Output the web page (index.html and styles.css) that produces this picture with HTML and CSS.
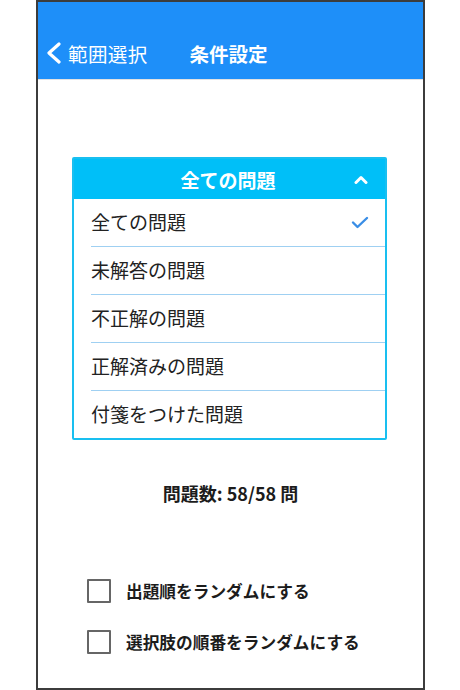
FILE: index.html
```html
<!DOCTYPE html>
<html lang="ja">
<head>
<meta charset="utf-8">
<link rel="stylesheet" href="styles.css">
</head>
<body>
<div class="phone">
  <header class="nav">
    <div class="nav-row">
      <a class="back">
        <svg class="back-icon" width="16" height="22" viewBox="0 0 16 22"><polyline points="13,2 3,11 13,20" fill="none" stroke="#fff" stroke-width="3.2" stroke-linecap="round" stroke-linejoin="round"/></svg>
        <span class="back-label">範囲選択</span>
      </a>
      <span class="nav-title">条件設定</span>
    </div>
  </header>
  <main class="content">
    <div class="dropdown">
      <div class="dd-head">
        <span class="dd-title">全ての問題</span>
        <svg class="dd-chevron" width="14" height="9" viewBox="0 0 14 9"><polyline points="2,7.5 7,2.5 12,7.5" fill="none" stroke="#fff" stroke-width="3" stroke-linecap="round" stroke-linejoin="round"/></svg>
      </div>
      <ul class="dd-list">
        <li class="dd-item"><span>全ての問題</span><svg class="check" width="18" height="13" viewBox="0 0 18 13"><polyline points="2,6.5 6.5,11 16,2" fill="none" stroke="#3a8ee6" stroke-width="2.4" stroke-linecap="round" stroke-linejoin="round"/></svg></li>
        <li class="dd-item"><span>未解答の問題</span></li>
        <li class="dd-item"><span>不正解の問題</span></li>
        <li class="dd-item"><span>正解済みの問題</span></li>
        <li class="dd-item"><span>付箋をつけた問題</span></li>
      </ul>
    </div>
    <p class="count">問題数: 58/58 問</p>
    <div class="options">
      <label class="opt"><span class="box"></span><span class="opt-label">出題順をランダムにする</span></label>
      <label class="opt"><span class="box"></span><span class="opt-label">選択肢の順番をランダムにする</span></label>
    </div>
  </main>
</div>
</body>
</html>
```

FILE: styles.css
```css
* { box-sizing: border-box; }
html, body { margin: 0; padding: 0; background: #fff; }
body {
  font-family: "Noto Sans CJK JP", "Noto Sans", sans-serif;
  width: 460px;
  height: 690px;
  overflow: hidden;
}
.phone {
  margin-left: 36px;
  width: 389px;
  height: 690px;
  border: 2px solid #3c3c3c;
  display: flex;
  flex-direction: column;
  background: #fff;
}
.nav {
  background: #1e8ff9;
  height: 78px;
  border-bottom: 1px solid #e2e2e2;
  padding-top: 26px;
}
.nav-row {
  height: 50px;
  display: flex;
  align-items: center;
  padding-left: 8px;
  color: #fff;
}
.back {
  display: flex;
  align-items: center;
  gap: 6px;
}
.back-icon { display: block; }
.back-label {
  font-size: 19.5px;
  font-weight: 400;
  letter-spacing: 0.4px;
}
.nav-title {
  margin-left: 42px;
  font-size: 19.5px;
  font-weight: 700;
}
.content {
  flex: 1;
  padding-top: 77px;
  display: flex;
  flex-direction: column;
}
.dropdown {
  margin-left: 34px;
  width: 315px;
  border: 2px solid #19bff0;
  border-radius: 2px;
}
.dd-head {
  background: #00bff8;
  height: 40px;
  display: flex;
  align-items: center;
  justify-content: center;
  position: relative;
  color: #fff;
}
.dd-title {
  font-size: 19px;
  font-weight: 700;
  margin-left: -3px;
}
.dd-chevron {
  position: absolute;
  right: 17px;
  top: 16px;
}
.dd-list {
  list-style: none;
  margin: 0;
  padding: 0;
}
.dd-item {
  margin-left: 17px;
  height: 48px;
  border-bottom: 1px solid #9fd0f2;
  display: flex;
  align-items: center;
  justify-content: space-between;
  padding-right: 16px;
  padding-bottom: 2px;
  font-size: 19px;
  color: #222;
}
.dd-item:last-child { border-bottom: none; height: 47px; }
.check { display: block; margin-top: 2px; }
.count {
  margin: 41px 0 0;
  text-align: center;
  font-size: 18px;
  font-weight: 700;
  color: #1c1c1c;
  line-height: 24px;
}
.options {
  margin-top: 74px;
  margin-left: 49px;
  display: flex;
  flex-direction: column;
  gap: 27px;
}
.opt {
  display: flex;
  align-items: center;
  gap: 15px;
  height: 24px;
}
.box {
  width: 24px;
  height: 24px;
  border: 2.5px solid #666;
  border-radius: 1px;
  flex: none;
}
.opt-label {
  font-size: 16.7px;
  font-weight: 700;
  color: #1c1c1c;
}
```
